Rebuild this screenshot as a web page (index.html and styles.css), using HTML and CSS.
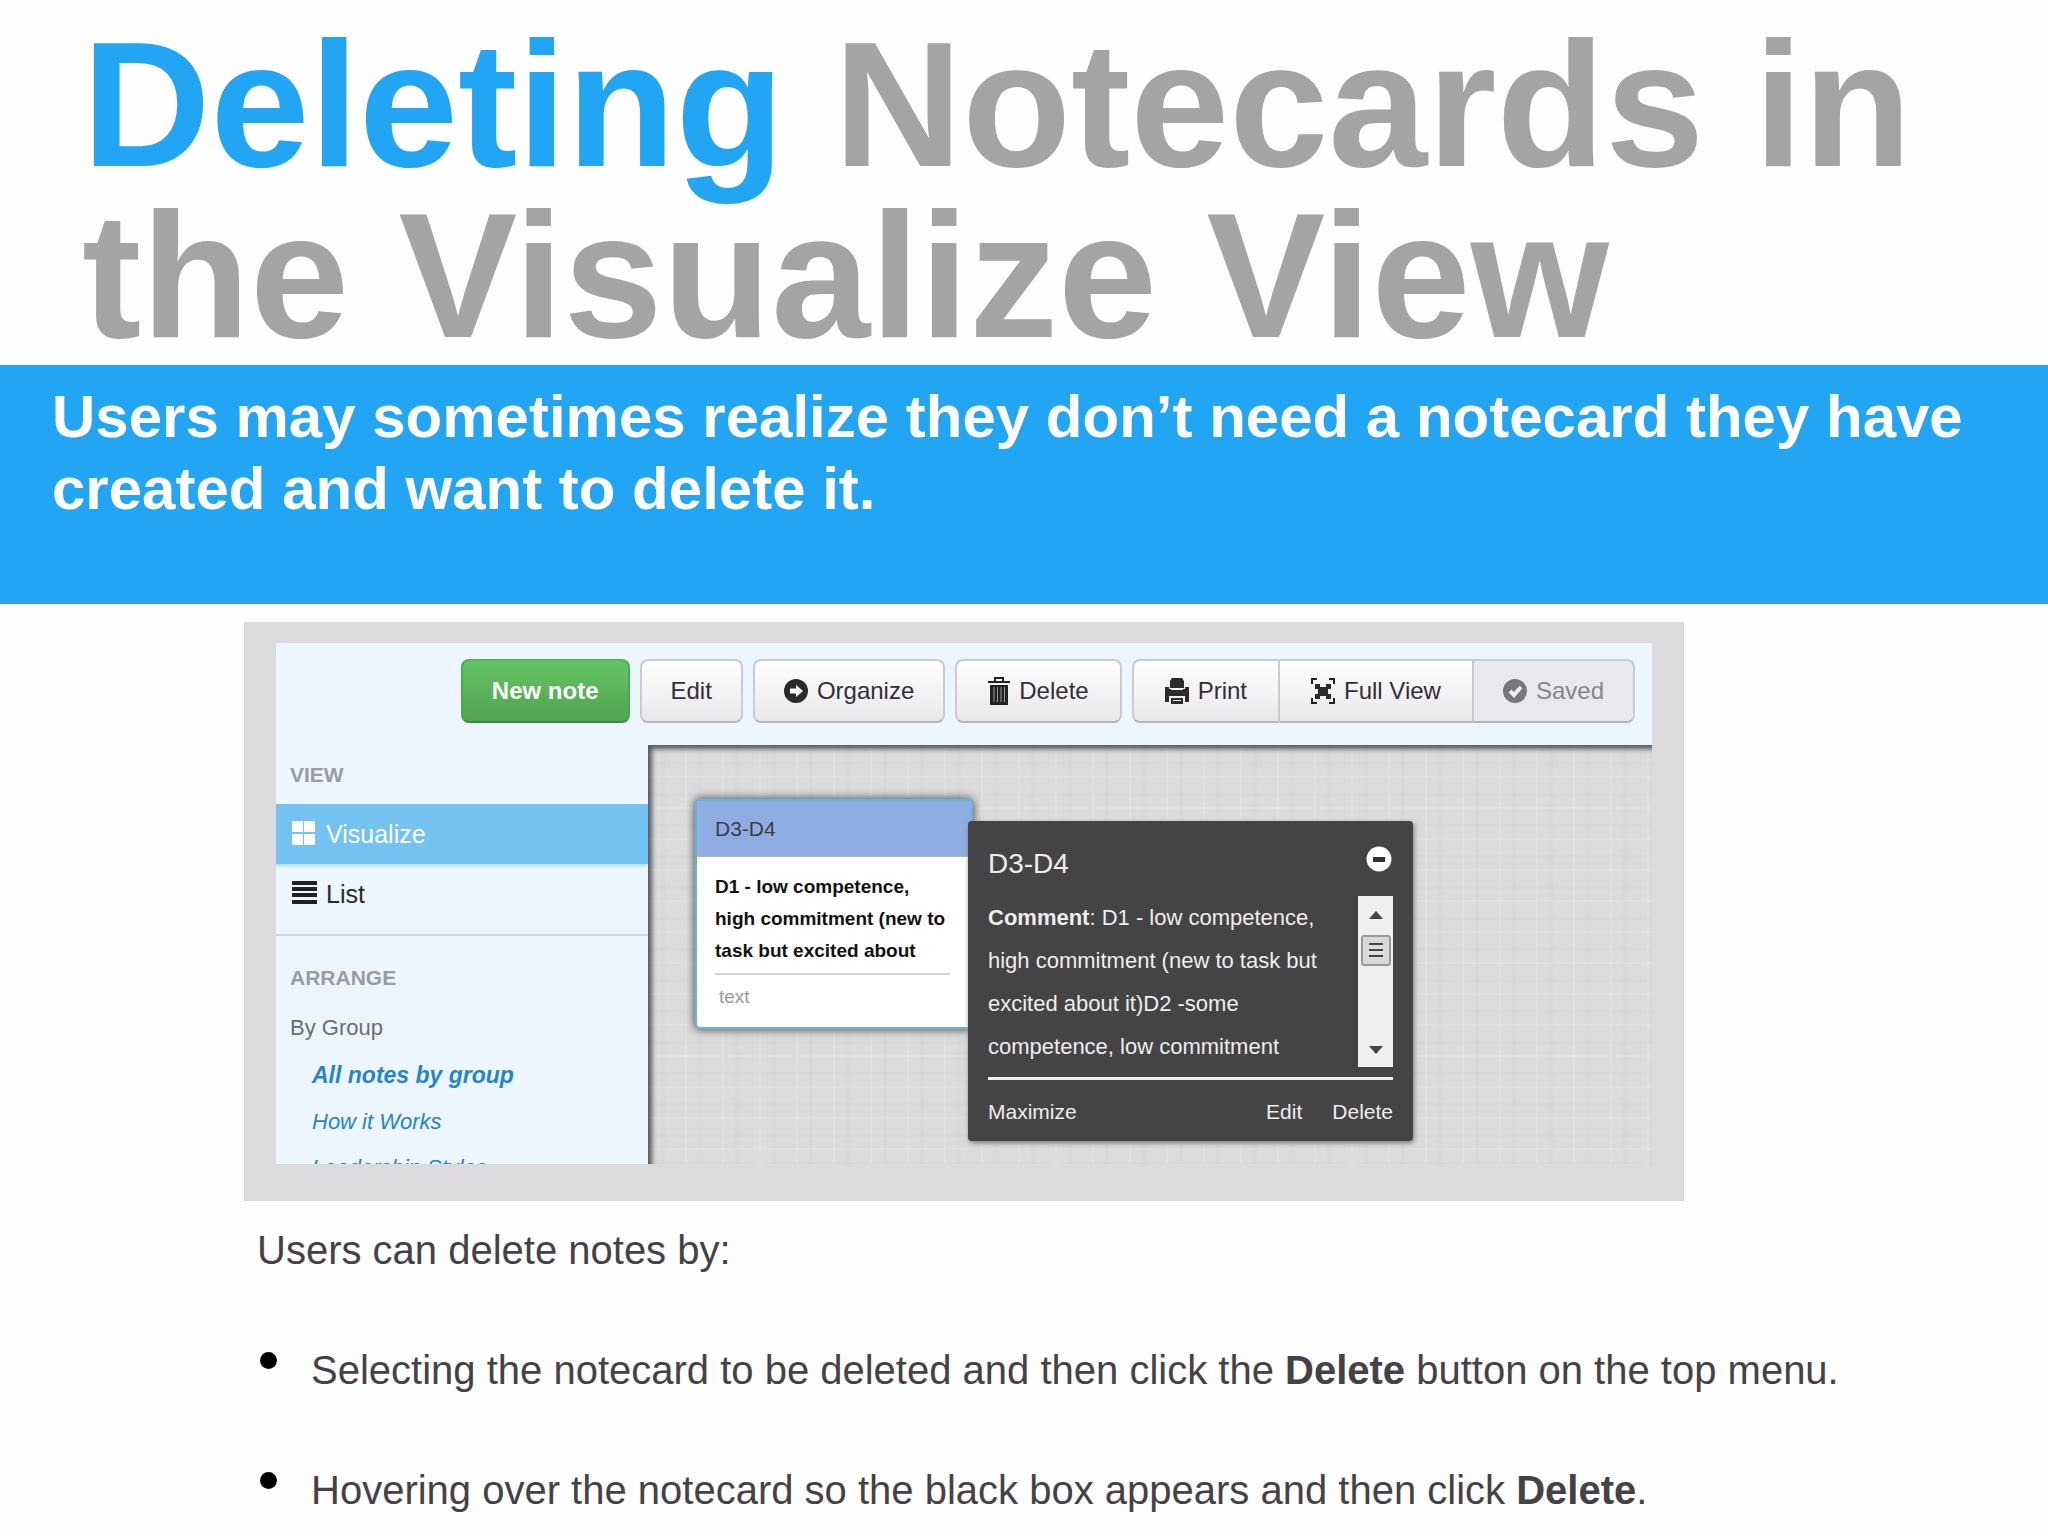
FILE: index.html
```html
<!DOCTYPE html>
<html lang="en">
<head>
    <meta charset="UTF-8">
    <meta name="viewport" content="width=device-width, initial-scale=1.0">
    <title>Deleting Notecards in the Visualize View</title>
    <link rel="stylesheet" href="styles.css">
</head>
<body>
    <h1><span>Deleting</span> Notecards in the Visualize View</h1>

    <p class="banner">Users may sometimes realize they don’t need a notecard they have created and want to delete it.</p>

    <div class="frame">
        <div class="app">
            <div class="toolbar">
                <button type="button" class="btn btn-new">New note</button>
                <button type="button" class="btn">Edit</button>
                <button type="button" class="btn">
                    <svg width="24" height="26" viewBox="0 0 24 26"><circle cx="12" cy="13" r="12" fill="#2b2b2e"/><path d="M6 10.500h6V7l7 6-7 6v-3.500H6z" fill="#fff"/></svg>
                    Organize
                </button>
                <button type="button" class="btn btn-wide">
                    <svg width="22" height="28" viewBox="0 0 22 28" fill="#222"><path d="M0 4h6V0h10v4h6v2H0zM8 2v2h6V2z" fill-rule="evenodd"/><path d="M2 8h18v20H2z"/><path d="M6 10v15M9.500 10v15M13 10v15M16.500 10v15" stroke="#999"/></svg>
                    Delete
                </button>
                <div class="btn-group">
                    <button type="button" class="btn btn-wide">
                        <svg width="24" height="26" viewBox="0 0 24 26" fill="#2b2b2e"><path d="M7 0h10l2 3v7H5V3z"/><path d="M0 9h4v3h16V9h4v15h-4v-6H4v6H0z"/><path d="M4 11h16v7H4z"/><path d="M6 20h12v6H6z"/><path d="M6 11h12v1H6zM4 18h16v2H4zM8 22h8v1H8z" fill="#eee"/></svg>
                        Print
                    </button>
                    <button type="button" class="btn btn-wide">
                        <svg width="24" height="26" viewBox="0 0 24 26"><path d="M1 6V1h5M18 1h5v5M23 20v5h-5M6 25H1v-5" fill="none" stroke="#222" stroke-width="2"/><path d="M4 6h5v3h6V6h5v5h-3v5h3v5h-5v-3H9v3H4v-5h3v-5H4z" fill="#2b2b2e"/></svg>
                        Full View
                    </button>
                    <button type="button" class="btn" disabled>
                        <svg width="24" height="26" viewBox="0 0 24 26"><circle cx="12" cy="13" r="12" fill="#77777b"/><path d="M7 13l4 4 7-8" fill="none" stroke="#eee" stroke-width="4"/></svg>
                        Saved
                    </button>
                </div>
            </div>

            <div class="main">
                <div class="sidebar">
                    <h2>VIEW</h2>
                    <a href="#" class="nav active">
                        <svg width="25" height="26" viewBox="0 0 25 26" fill="#fff"><path d="M0 0h11v11H0zM12 0h11v11H12zM0 13h11v11H0zM12 13h11v11H12z"/></svg>
                        Visualize
                    </a>
                    <a href="#" class="nav">
                        <svg width="25" height="26" viewBox="0 0 25 26" fill="#222"><path d="M0 0h25v4H0zM0 6h25v4H0zM0 12h25v4H0zM0 19h25v4H0z"/></svg>
                        List
                    </a>
                    <div class="arrange">
                        <h2>ARRANGE</h2>
                        <h3>By Group</h3>
                        <ul>
                            <li><a href="#" class="current">All notes by group</a></li>
                            <li><a href="#">How it Works</a></li>
                            <li><a href="#">Leadership Styles</a></li>
                        </ul>
                    </div>
                </div>

                <div class="canvas">
                    <div class="card">
                        <h3>D3-D4</h3>
                        <div class="card-body">
                            <p>D1 - low competence, high commitment (new to task but excited about</p>
                            <small>text</small>
                        </div>
                    </div>

                    <!-- shown when the card is hovered -->
                    <div class="popup">
                        <div class="popup-head">
                            <h3>D3-D4</h3>
                            <button type="button" aria-label="Minimize">
                                <svg width="26" height="26" viewBox="0 0 26 26"><circle cx="13" cy="13" r="12.500" fill="#fff"/><path d="M7 11h12v5H7z" fill="#333"/></svg>
                            </button>
                        </div>
                        <div class="popup-body">
                            <p><b>Comment</b>: D1 - low competence, high commitment (new to task but excited about it)D2 -some competence, low commitment</p>
                            <div class="scrollbar">
                                <svg width="14" height="8" viewBox="0 0 14 8"><path d="M0 8l7-8 7 8z" fill="#444"/></svg>
                                <span class="thumb"></span>
                                <svg class="down" width="14" height="8" viewBox="0 0 14 8"><path d="M0 0l7 8 7-8z" fill="#444"/></svg>
                            </div>
                        </div>
                        <div class="popup-foot">
                            <a href="#">Maximize</a>
                            <a href="#" class="push">Edit</a>
                            <a href="#">Delete</a>
                        </div>
                    </div>
                </div>
            </div>
        </div>
    </div>

    <div class="steps">
        <p>Users can delete notes by:</p>
        <ul>
            <li>Selecting the notecard to be deleted and then click the <b>Delete</b> button on the top menu.</li>
            <li>Hovering over the notecard so the black box appears and then click <b>Delete</b>.</li>
        </ul>
    </div>
</body>
</html>
```

FILE: styles.css
```css
* {
    box-sizing: border-box;
}

body {
    margin: 0;
    background: #fefefe;
    font-family: "Liberation Sans", Arial, sans-serif;
    color: #444246;
}

h1, h2, h3, p, ul {
    margin: 0;
    padding: 0;
}

ul {
    list-style: none;
}

a {
    text-decoration: none;
}

h1 {
    padding: 19px 80px 4px 82px;
    font-size: 178px;
    line-height: 171px;
    color: #a4a4a4;
}

h1 span {
    color: #22a5f3;
}

.banner {
    min-height: 239px;
    padding: 16px 52px;
    background: #22a5f3;
    color: #fdfbff;
    font-size: 60px;
    font-weight: bold;
    line-height: 72px;
}

.frame {
    max-width: 1440px;
    margin: 18px 0 0 244px;
    padding: 21px 32px 37px;
    background: #dcdadd;
}

.app {
    background: #edf6ff;
}

/* toolbar */
.toolbar {
    display: flex;
    justify-content: flex-end;
    gap: 10px;
    padding: 16px 17px 22px;
}

.btn {
    display: flex;
    align-items: center;
    gap: 9px;
    height: 64px;
    padding: 0 29px;
    border: 2px solid #cbcad0;
    border-bottom-color: #b5b4ba;
    border-radius: 8px;
    background: linear-gradient(#fff, #e9e7ea);
    color: #303036;
    font-family: inherit;
    font-size: 24px;
}

.btn-wide {
    padding: 0 31px;
}

.btn-new {
    border-color: #55b155 #4fa64f #3f8a40;
    background: linear-gradient(#63c464, #51a351);
    color: #fff;
    font-weight: bold;
}

.btn:disabled {
    background: #e9e8ed;
    color: #85858a;
}

.btn-group {
    display: flex;
}

.btn-group .btn {
    border-radius: 0;
}

.btn-group .btn + .btn {
    border-left: 0;
}

.btn-group .btn:first-child {
    border-radius: 8px 0 0 8px;
}

.btn-group .btn:last-child {
    border-radius: 0 8px 8px 0;
}

.main {
    display: grid;
    grid-template-columns: 372px 1fr;
    height: 419px;
}

/* sidebar */
.sidebar {
    overflow: hidden;
}

.sidebar h2 {
    padding-left: 14px;
    font-size: 21px;
    line-height: 59px;
    color: #999ba0;
}

.nav {
    display: flex;
    align-items: center;
    gap: 9px;
    height: 60px;
    padding-left: 16px;
    color: #2b2735;
    font-size: 25px;
}

.nav.active {
    background: #73c2f1;
    box-shadow: 0 2px 3px #a9dcf8;
    color: #fff;
}

.arrange {
    margin-top: 10px;
    padding-top: 17px;
    border-top: 2px solid #ccd8e2;
}

.arrange h2 {
    line-height: 50px;
}

.arrange h3 {
    padding-left: 14px;
    font-size: 22px;
    font-weight: normal;
    line-height: 49px;
    color: #6b6b78;
}

.arrange li {
    padding-left: 36px;
    font-size: 22px;
    font-style: italic;
    line-height: 46px;
}

.arrange a {
    color: #2585c7;
}

.arrange .current {
    font-size: 23px;
    font-weight: bold;
}

/* canvas */
.canvas {
    position: relative;
    background:
        repeating-linear-gradient(90deg, rgba(255, 255, 255, 0.12) 0 2px, transparent 2px 13px, rgba(0, 0, 0, 0.01) 13px 17px, transparent 17px 37px),
        repeating-linear-gradient(rgba(255, 255, 255, 0.12) 0 2px, transparent 2px 17px, rgba(0, 0, 0, 0.01) 17px 20px, transparent 20px 31px),
        #dbdbdc;
    box-shadow: inset 4px 4px 5px #55575b;
    clip-path: inset(0);
}

.card {
    position: absolute;
    left: 47px;
    top: 54px;
    width: 278px;
    border: 2px solid #62b5e0;
    border-radius: 5px;
    background: #fff;
    box-shadow: 0 0 8px 1px #555;
}

.card h3 {
    padding-left: 18px;
    border-bottom: 1px solid #b0b4c6;
    background: #90ade3;
    color: #3a3c44;
    font-size: 21px;
    font-weight: normal;
    line-height: 55px;
}

.card-body {
    padding: 14px 21px 12px 18px;
}

.card p {
    padding-bottom: 6px;
    border-bottom: 2px solid #d5d5d8;
    color: #111;
    font-size: 19px;
    font-weight: bold;
    line-height: 32px;
}

.card small {
    display: block;
    margin-top: 4px;
    padding-left: 4px;
    color: #999;
    font-size: 19px;
    line-height: 36px;
}

.popup {
    position: absolute;
    left: 320px;
    top: 76px;
    width: 445px;
    padding: 20px 20px 15px;
    border-radius: 4px;
    background: #444;
    box-shadow: 1px 2px 5px #777;
    color: #eee;
}

.popup-head {
    display: flex;
    justify-content: space-between;
    height: 55px;
}

.popup-head h3 {
    font-size: 28px;
    font-weight: normal;
    line-height: 46px;
}

.popup-head button {
    height: 26px;
    margin: 5px 1px 0 0;
    padding: 0;
    border: 0;
    background: none;
}

.popup-body {
    display: flex;
    justify-content: space-between;
    height: 181px;
    padding-bottom: 10px;
}

.popup-body p {
    width: 350px;
    font-size: 22px;
    line-height: 43px;
}

.scrollbar {
    display: flex;
    flex-direction: column;
    align-items: center;
    width: 35px;
    padding: 15px 0 13px;
    background: #efeff1;
}

.thumb {
    width: 30px;
    height: 31px;
    margin-top: 16px;
    border: 2px solid #98989b;
    border-radius: 3px;
    background: repeating-linear-gradient(#444 0 2px, #ddd 2px 6px) center / 14px 15px no-repeat #d8d8da;
}

.down {
    margin-top: auto;
}

.popup-foot {
    display: flex;
    gap: 30px;
    padding-top: 18px;
    border-top: 3px solid #eee;
    font-size: 21px;
    line-height: 28px;
}

.popup-foot a {
    color: #eee;
}

.push {
    margin-left: auto;
}

/* instructions below the picture */
.steps {
    padding: 29px 60px 26px 257px;
    font-size: 40px;
    line-height: 40px;
}

.steps li {
    position: relative;
    margin-top: 80px;
    padding-left: 54px;
}

.steps li::before {
    content: "";
    position: absolute;
    left: 3px;
    top: 2px;
    width: 17px;
    height: 17px;
    border-radius: 50%;
    background: #000;
}
```
